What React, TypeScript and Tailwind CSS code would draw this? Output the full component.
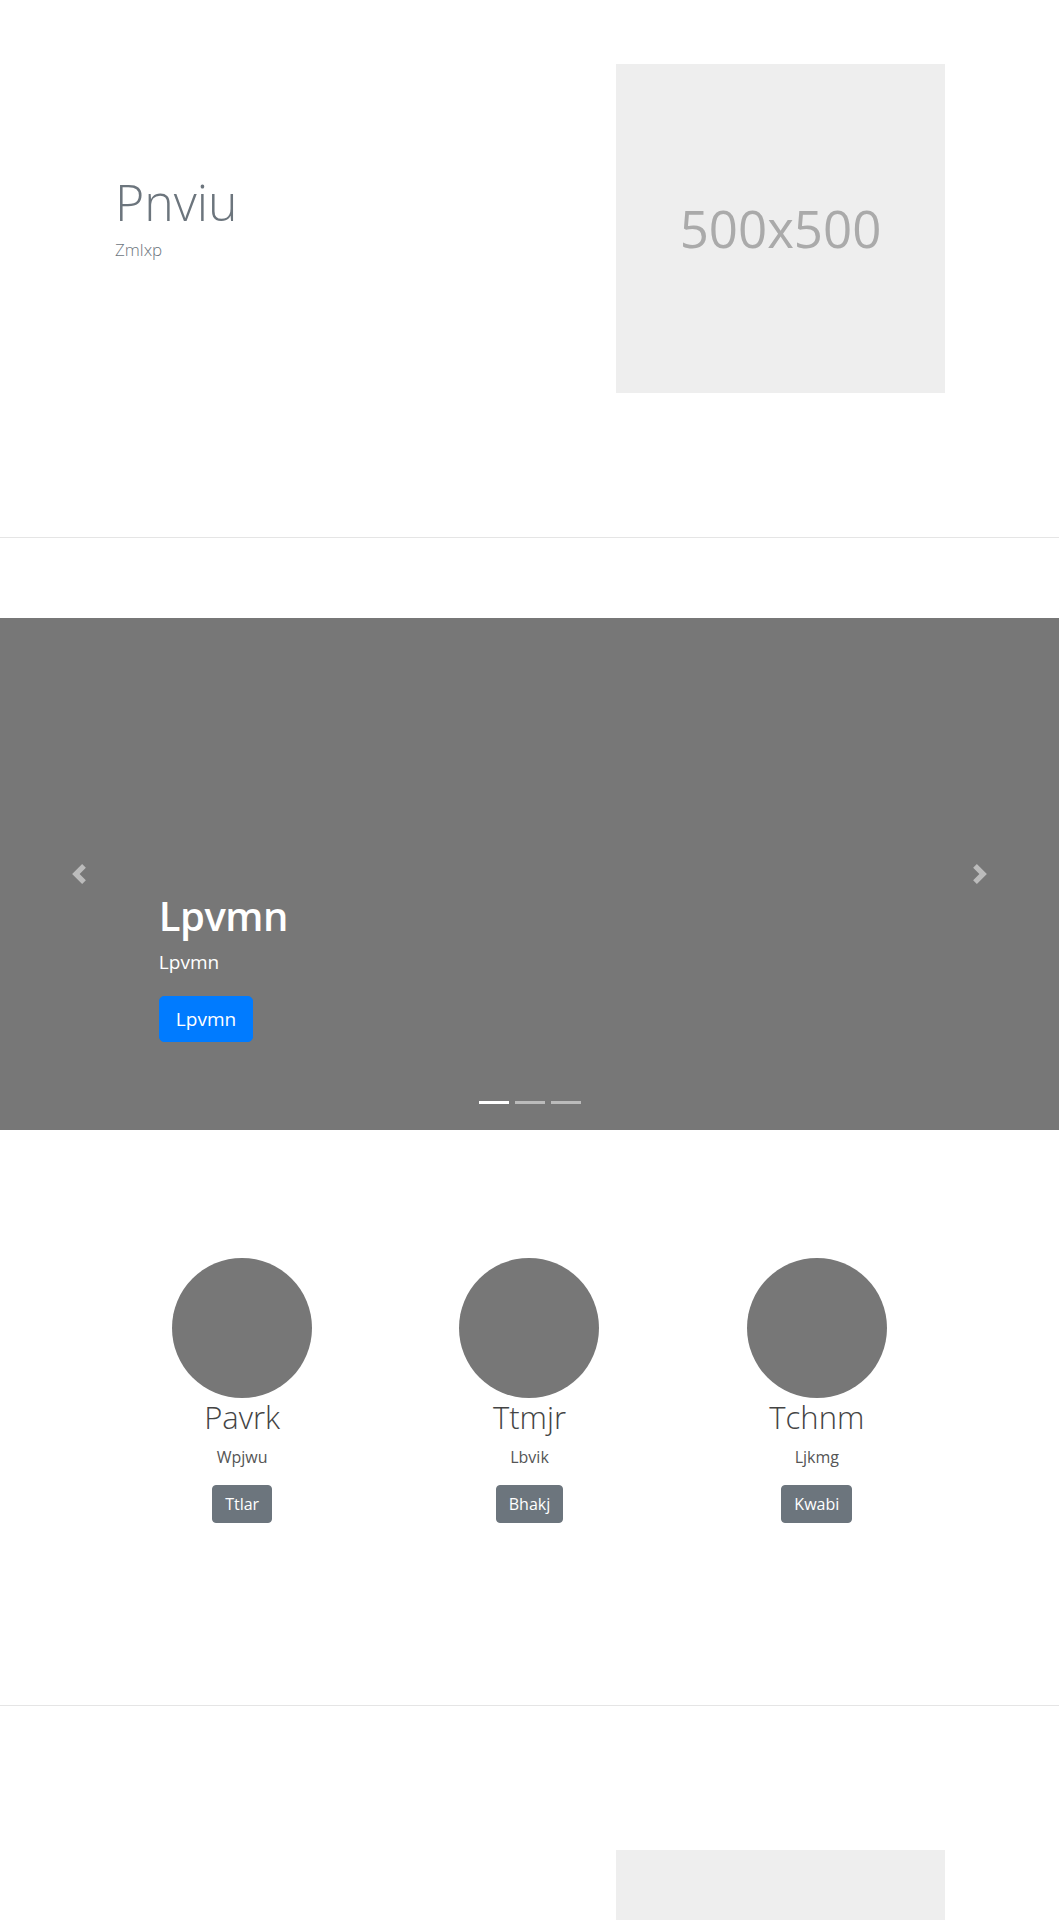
import React from 'react';

const font = { fontFamily: '"Open Sans", "Noto Sans", Arial, sans-serif' };

// placeholder picture box, like a 500x500 dummy image
function Placeholder({ label }: { label: string }) {
  return (
    <div className="w-[329px] h-[329px] bg-[#eeeeee] flex items-center justify-center shrink-0">
      <span className="text-[#aaaaaa] text-[51px] leading-none">{label}</span>
    </div>
  );
}

function Chevron({ dir }: { dir: 'prev' | 'next' }) {
  return (
    <svg width="20" height="20" viewBox="0 0 8 8" fill="#fff" className="opacity-50">
      {dir === 'prev' ? (
        <path d="M5.25 0l-4 4 4 4 1.5-1.5L4.25 4l2.5-2.5L5.25 0z" />
      ) : (
        <path d="M2.75 0l-1.5 1.5L3.75 4l-2.5 2.5L2.75 8l4-4-4-4z" />
      )}
    </svg>
  );
}

function Carousel() {
  return (
    <div className="relative w-full h-[512px] bg-[#777777] overflow-hidden">
      {/* controls */}
      <div className="absolute left-0 top-0 bottom-0 w-[15%] flex items-center justify-center">
        <Chevron dir="prev" />
      </div>
      <div className="absolute right-0 top-0 bottom-0 w-[15%] flex items-center justify-center">
        <Chevron dir="next" />
      </div>

      {/* caption */}
      <div className="absolute left-[15%] right-[15%] bottom-[88px] text-left text-white">
        <h1 className="text-[40px] leading-[1.2] font-semibold tracking-[-0.5px] mb-2">Lpvmn</h1>
        <p className="text-[19px] leading-[1.5] mb-[19px]">Lpvmn</p>
        <button className="bg-[#007bff] text-white text-[19px] leading-[1.5] px-4 py-2 rounded-[5px] border border-[#007bff]">
          Lpvmn
        </button>
      </div>

      {/* indicators */}
      <div className="absolute left-0 right-0 bottom-[26px] flex justify-center">
        <span className="w-[30px] h-[3px] mx-[3px] bg-white" />
        <span className="w-[30px] h-[3px] mx-[3px] bg-white/50" />
        <span className="w-[30px] h-[3px] mx-[3px] bg-white/50" />
      </div>
    </div>
  );
}

const team = [
  { name: 'Pavrk', role: 'Wpjwu', action: 'Ttlar' },
  { name: 'Ttmjr', role: 'Lbvik', action: 'Bhakj' },
  { name: 'Tchnm', role: 'Ljkmg', action: 'Kwabi' },
];

export default function App() {
  return (
    <div className="w-full min-h-screen bg-white overflow-hidden" style={font}>
      {/* Hero */}
      <section className="flex justify-between px-[114px] pt-16 pb-[144px]">
        <div className="pt-[108px] pl-px">
          <h1 className="text-[50px] leading-[1.2] font-light text-[#6c757d] mb-[5px]">Pnviu</h1>
          <p className="text-[17px] leading-[1.5] font-light text-[#6c757d]">Zmlxp</p>
        </div>
        <Placeholder label="500x500" />
      </section>

      <hr className="border-0 border-t border-[#e5e5e5] mb-20" />

      <Carousel />

      {/* Team */}
      <section className="pt-32 pb-[182px]">
        <div className="w-[862px] mx-auto grid grid-cols-3">
          {team.map((m) => (
            <div key={m.name} className="flex flex-col items-center text-center">
              <div className="w-[140px] h-[140px] rounded-full bg-[#777777]" />
              <h2 className="text-[31px] leading-[1.2] font-light text-[#444] mt-px mb-2">{m.name}</h2>
              <p className="text-[16px] leading-[1.5] text-[#555] mt-px mb-4">{m.role}</p>
              <button className="bg-[#6c757d] text-white text-[16px] leading-[1.5] px-3 py-[6px] rounded border border-[#6c757d]">
                {m.action}
              </button>
            </div>
          ))}
        </div>
      </section>

      <hr className="border-0 border-t border-[#e5e5e5]" />

      {/* second feature */}
      <section className="flex justify-end px-[114px] pt-[144px] pb-16">
        <Placeholder label="500x500" />
      </section>
    </div>
  );
}
